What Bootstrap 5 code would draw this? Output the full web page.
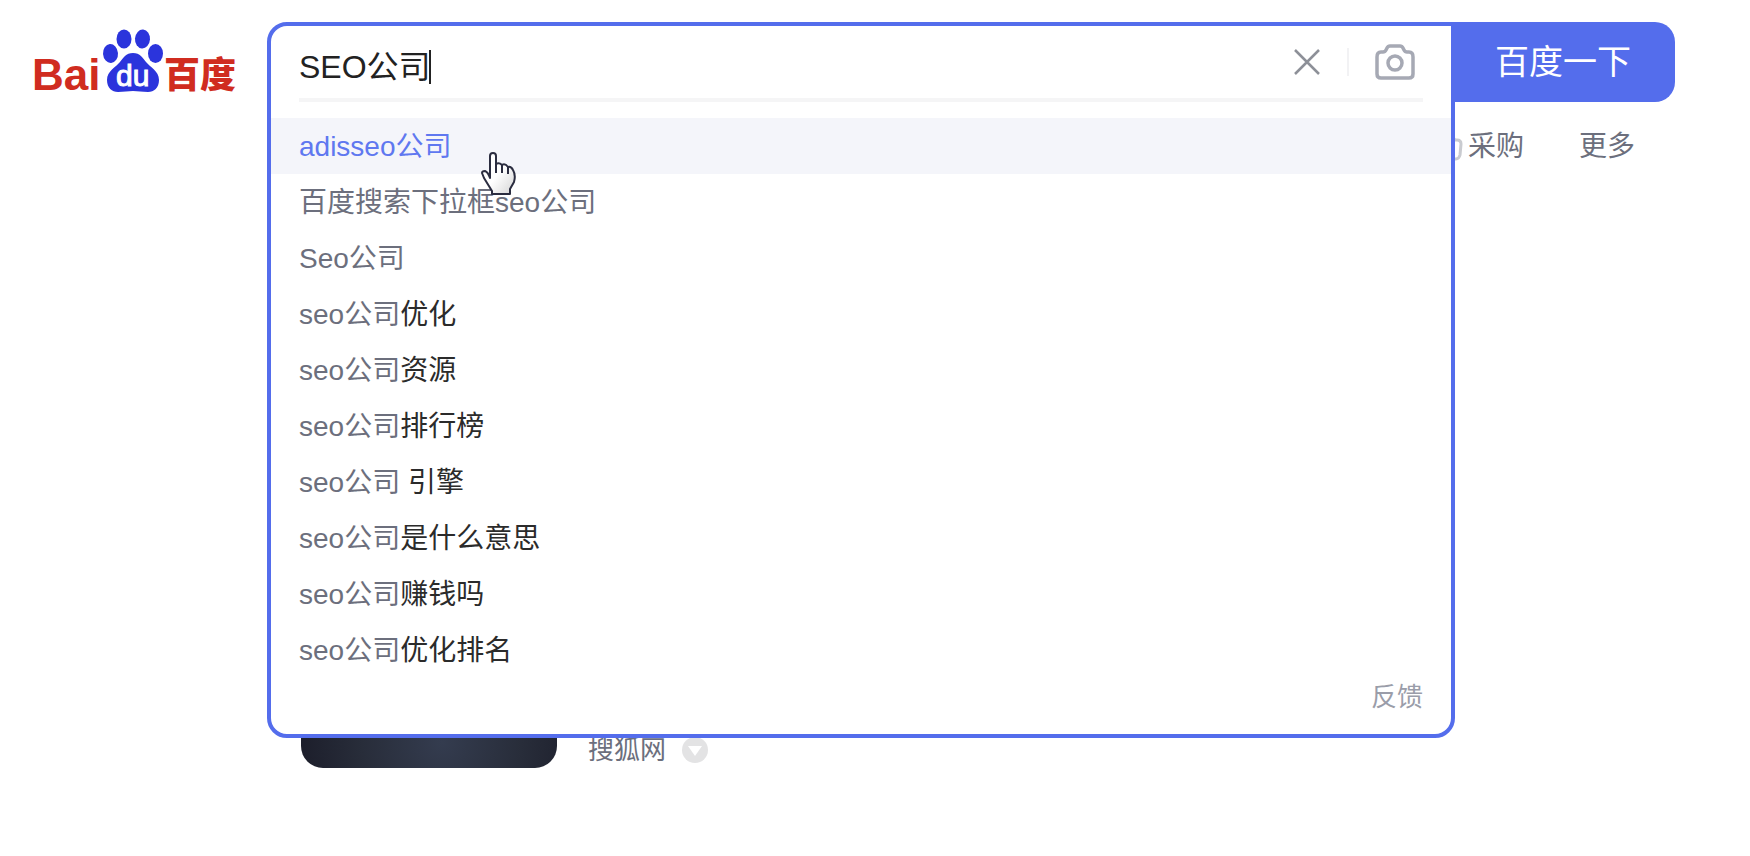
<!DOCTYPE html>
<html lang="zh-CN">
<head>
<meta charset="utf-8">
<meta name="viewport" content="width=device-width, initial-scale=1">
<title>SEO公司_百度搜索</title>
<link href="https://cdn.jsdelivr.net/npm/bootstrap@5.3.0/dist/css/bootstrap.min.css" rel="stylesheet">
<style>
  :root { --brand: #546dec; --ink: #2b2b2b; --muted: #6c6f7d; --faint: #9a9da9; }
  body { font-family: "Liberation Sans", "Noto Sans CJK SC", sans-serif; font-size: 28px; line-height: 58px; color: var(--ink); background: #fff; }
  .page-head { padding: 22px 75px 0 32px; }
  .logo-link { width: 235px; }
  .search-form { height: 80px; }
  .search-panel { top: 0; left: 0; right: -4px; z-index: 10; background: #fff; border: 4px solid var(--brand); border-radius: 20px; border-top-right-radius: 0; }
  .field-row { height: 76px; margin: 0 28px 16px; border-bottom: 4px solid #f5f5f6; }
  .query-input { width: 130px; height: 48px; margin-top: 10px; font-size: 32px; color: #222; outline: 0; }
  .caret-bar { width: 2px; height: 34px; margin-top: 10px; background: #222; }
  .field-rule { width: 2px; height: 28px; margin: 0 26px; background: #f2f2f4; }
  .suggestion { height: 56px; padding: 0 28px; color: var(--ink); }
  .suggestion .typed { color: var(--muted); }
  .suggestion.is-hovered { background: #f4f5fa; color: #5f78f0; }
  .feedback { height: 56px; padding: 0 28px; font-size: 26px; line-height: 38px; }
  .feedback a { color: var(--faint); }
  .search-btn { width: 224px; background: var(--brand); color: #fff; font-size: 34px; line-height: 80px; border-radius: 0 20px 20px 0; }
  .hand { left: 213px; top: 129px; z-index: 20; }
  .tab-row { gap: 55px; padding: 16px 115px 0 0; }
  .tab-row a { color: var(--muted); }
  .result { gap: 31px; padding: 419px 75px 0 301px; }
  .thumb { width: 256px; height: 173px; border-radius: 22px; background: radial-gradient(ellipse at 55% 85%, #343c4f 0%, #282d3a 40%, #191a27 80%, #15161c 100%); }
  .source { gap: 16px; font-size: 26px; line-height: 36px; }
  .source a { color: var(--muted); }
</style>
</head>
<body>
<header class="page-head d-flex align-items-start">
  <a class="logo-link flex-shrink-0" href="#" aria-label="百度首页">
    <svg class="d-block" width="206" height="76" viewBox="0 0 206 76" aria-hidden="true">
      <g fill="#2b34dc">
        <ellipse cx="78.500" cy="31.500" rx="7.500" ry="9.500" transform="rotate(-4 78.500 31.500)"/>
        <ellipse cx="92" cy="17" rx="7.500" ry="9.500"/>
        <ellipse cx="110.500" cy="17" rx="7.500" ry="9.500" transform="rotate(4 110 17)"/>
        <ellipse cx="123.500" cy="31.500" rx="7.500" ry="9.500"/>
        <path d="M101 31 C94 31 91 36 88 40 C84 45 75 49 75 58 C75 66 80 70 86 70 C92 70 96 69 101 69 C106 69 110 70 116 70 C122 70 127 66 127 58 C127 49 118 45 114 40 C111 36 108 31 101 31 Z"/>
      </g>
      <g font-weight="700" font-family="Liberation Sans, Noto Sans CJK SC, sans-serif">
        <text x="0" y="68" font-size="44" fill="#d02c20">Bai</text>
        <text x="84" y="64" font-size="30" font-weight="400" fill="#fff" stroke="#fff">du</text>
        <text x="132" y="66" font-size="36" font-weight="900" fill="#d02c20">百度</text>
      </g>
    </svg>
  </a>
  <form class="search-form d-flex flex-grow-1 position-relative" onsubmit="return false">
    <div class="flex-grow-1 position-relative">
      <div class="search-panel position-absolute">
        <div class="field-row d-flex align-items-center">
          <input class="query-input border-0 p-0 bg-transparent" type="text" value="SEO公司" aria-label="搜索">
          <span class="caret-bar"></span>
          <button class="btn border-0 p-0 ms-auto d-flex" type="button" aria-label="清空">
            <svg width="28" height="28" viewBox="0 0 28 28" fill="none" stroke="#8d9098" stroke-width="2.500"><path d="M2 2L26 26M26 2L2 26"/></svg>
          </button>
          <span class="field-rule"></span>
          <button class="btn border-0 p-0 me-2 d-flex" type="button" aria-label="按图片搜索">
            <svg width="40" height="36" viewBox="0 0 40 36" fill="none" stroke="#a6a9b4" stroke-width="3.500" stroke-linejoin="round"><path d="M2 13Q2 8 6 8H8Q10 8 11 6L12 4Q13 2 15 2H25Q27 2 28 4L29 6Q30 8 32 8H34Q38 8 38 13V30Q38 34 34 34H6Q2 34 2 30Z"/><circle cx="20" cy="19" r="7"/></svg>
          </button>
        </div>
        <ul class="list-unstyled mb-0">
          <li><a class="suggestion is-hovered d-block text-decoration-none" href="#">adisseo公司</a></li>
          <li><a class="suggestion d-block text-decoration-none" href="#"><span class="typed">百度搜索下拉框seo公司</span></a></li>
          <li><a class="suggestion d-block text-decoration-none" href="#"><span class="typed">Seo公司</span></a></li>
          <li><a class="suggestion d-block text-decoration-none" href="#"><span class="typed">seo公司</span>优化</a></li>
          <li><a class="suggestion d-block text-decoration-none" href="#"><span class="typed">seo公司</span>资源</a></li>
          <li><a class="suggestion d-block text-decoration-none" href="#"><span class="typed">seo公司</span>排行榜</a></li>
          <li><a class="suggestion d-block text-decoration-none" href="#"><span class="typed">seo公司</span> 引擎</a></li>
          <li><a class="suggestion d-block text-decoration-none" href="#"><span class="typed">seo公司</span>是什么意思</a></li>
          <li><a class="suggestion d-block text-decoration-none" href="#"><span class="typed">seo公司</span>赚钱吗</a></li>
          <li><a class="suggestion d-block text-decoration-none" href="#"><span class="typed">seo公司</span>优化排名</a></li>
        </ul>
        <div class="feedback text-end"><a class="text-decoration-none" href="#">反馈</a></div>
      </div>
    </div>
    <button class="search-btn border-0 p-0 flex-shrink-0 d-flex justify-content-center" type="submit">百度一下</button>
    <svg class="hand position-absolute" width="38" height="46" viewBox="0 0 38 46" aria-hidden="true">
      <defs><linearGradient id="palm" x1="0" y1="0" x2="1" y2="1"><stop offset=".5" stop-color="#fff"/><stop offset="1" stop-color="#d4d4d4"/></linearGradient></defs>
      <path d="M10 27V5Q10 2 13 2T16 5V13Q19 11 22 14Q25 12 28 16Q31 15 33 19Q36 24 34 31L30 38V43H12V40L4 27L2 22Q2 20 5 20Q8 21 10 27Z" fill="url(#palm)" stroke="#2b2d40" stroke-width="2" stroke-linejoin="round"/>
      <path d="M16 12V22M22 14V22M28 16V23" fill="none" stroke="#2b2d40" stroke-width="2"/>
    </svg>
  </form>
</header>
<nav class="tab-row d-flex justify-content-end" aria-label="搜索分类">
  <a class="text-decoration-none d-flex align-items-center" href="#">
    <svg class="me-1" width="26" height="28" viewBox="0 0 26 28" fill="none" stroke="#c9cbd0" stroke-width="3" aria-hidden="true"><path d="M13 8V2L17 7H19Q23 7 23 11L22 22Q21 26 18 26H4V8Z" stroke-linejoin="round"/></svg>采购</a>
  <a class="text-decoration-none" href="#">更多</a>
</nav>
<main class="result d-flex align-items-end">
  <div class="thumb flex-shrink-0"></div>
  <div class="source d-flex align-items-center">
    <a class="text-decoration-none" href="#">搜狐网</a>
    <button class="btn border-0 p-0 d-flex" type="button" aria-label="更多信息">
      <svg width="26" height="26" viewBox="0 0 26 26"><circle cx="13" cy="13" r="13" fill="#e3e3e4"/><path d="M6 9H20L13 19Z" fill="#fff"/></svg>
    </button>
  </div>
</main>
<script src="https://cdn.jsdelivr.net/npm/bootstrap@5.3.0/dist/js/bootstrap.bundle.min.js"></script>
</body>
</html>
